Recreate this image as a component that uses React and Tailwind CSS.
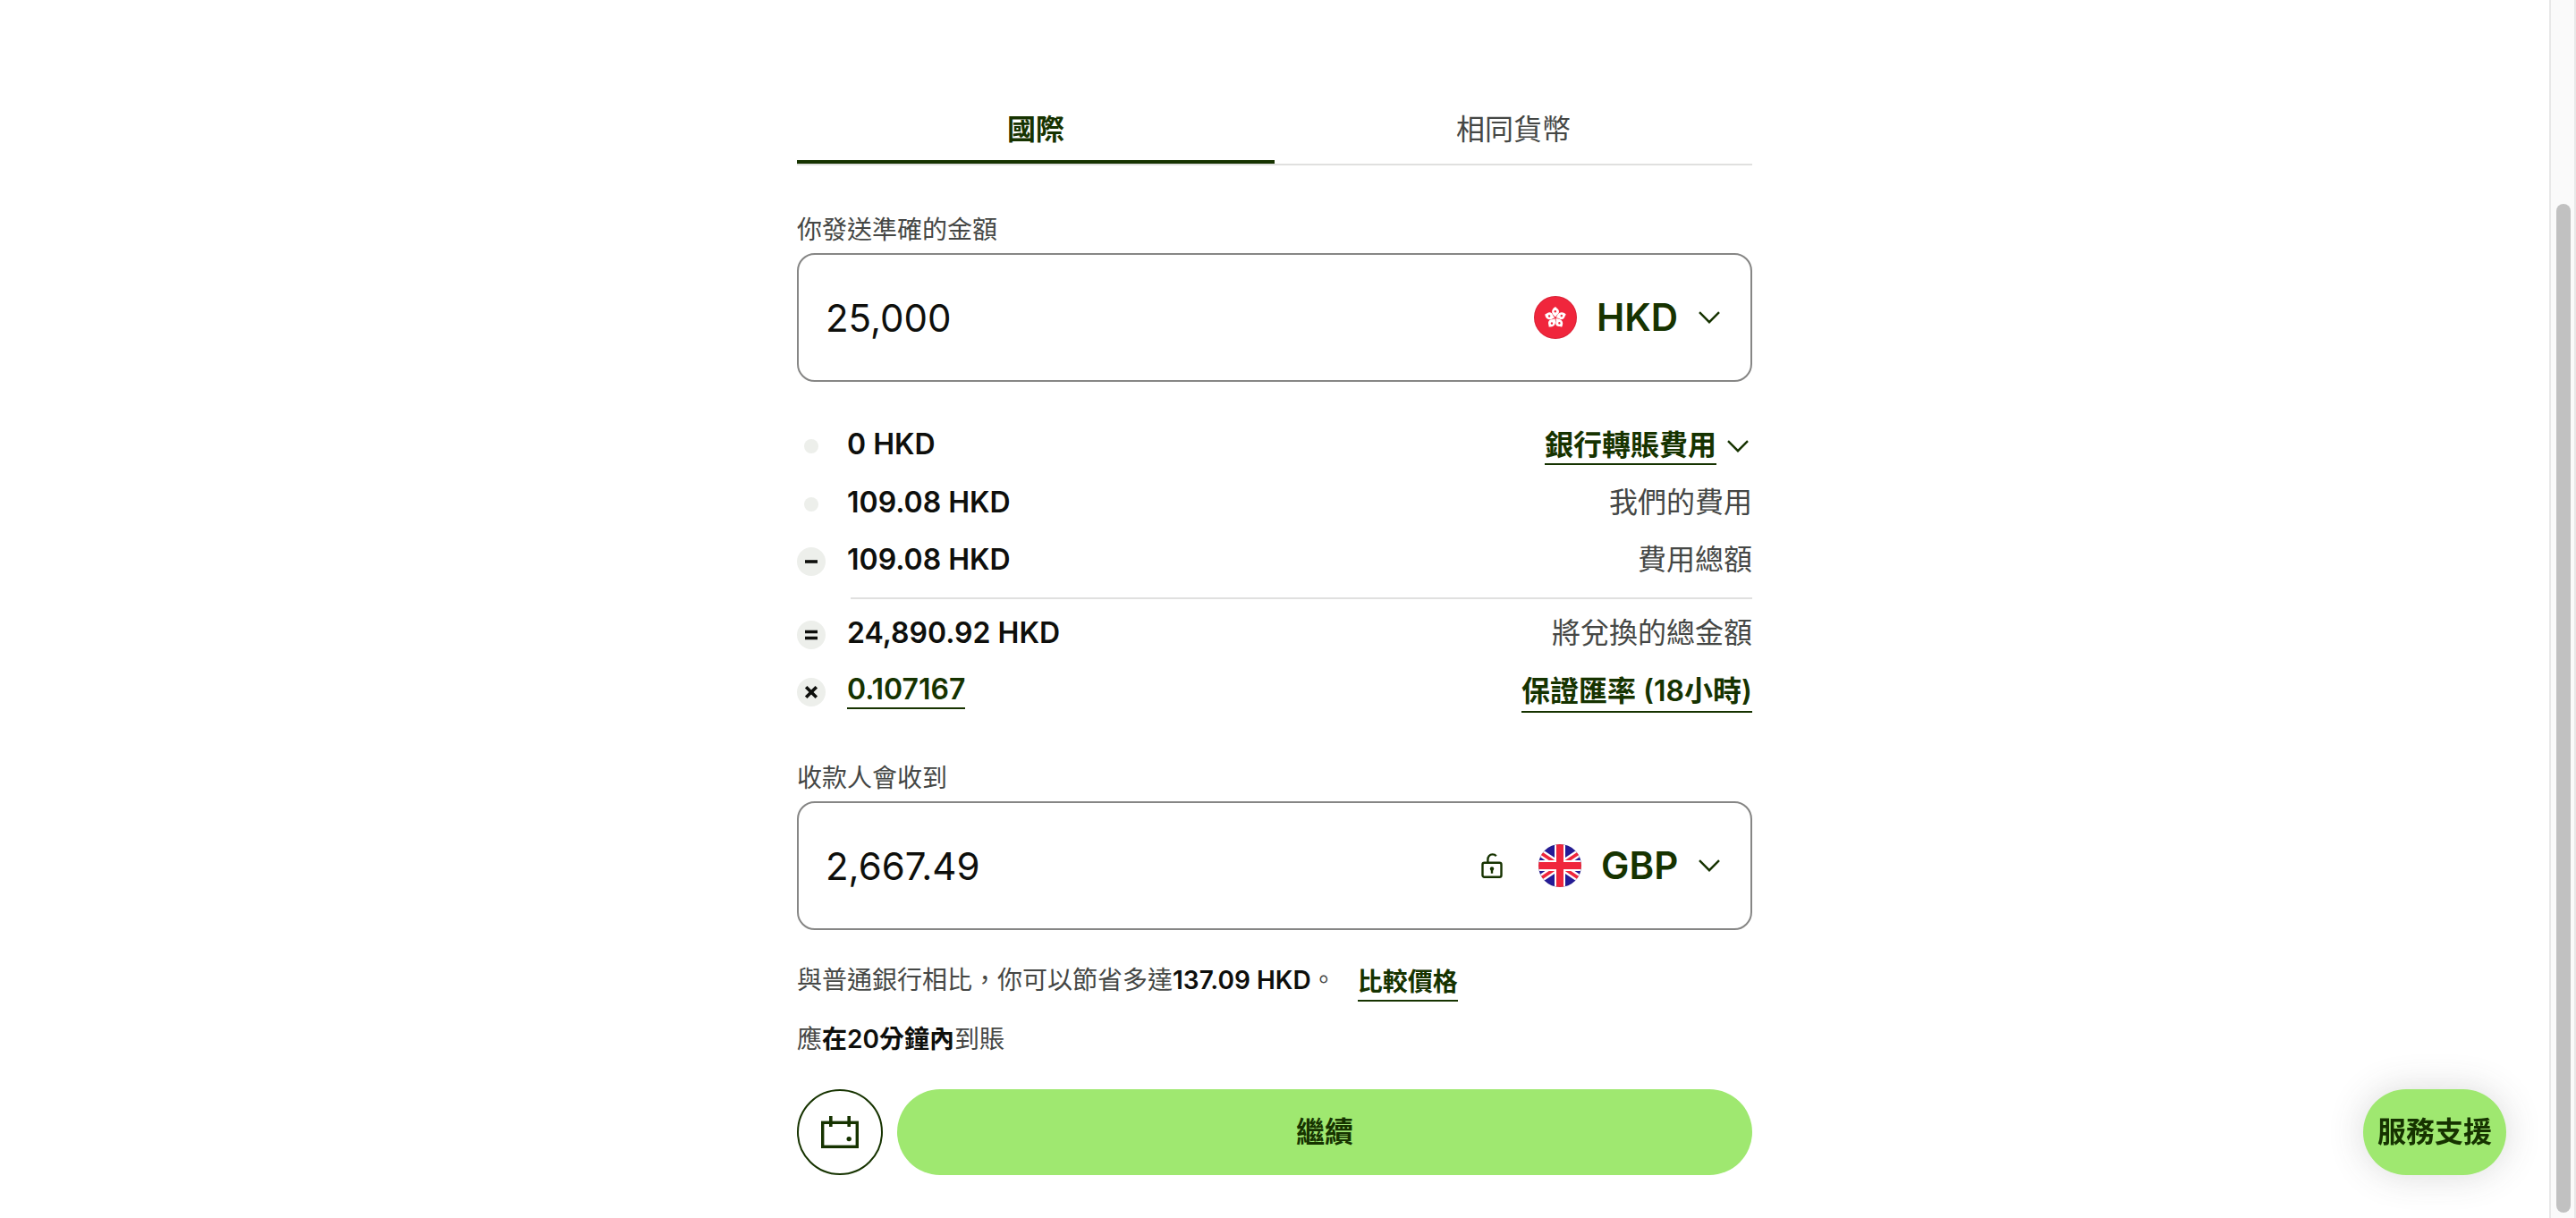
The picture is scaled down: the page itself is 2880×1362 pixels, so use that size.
import React, { useState } from "react";

function Chevron() {
  return (
    <svg className="h-4 w-6 shrink-0" viewBox="0 0 24 16" fill="none" aria-hidden="true">
      <path d="M1 2.2 12 13.2 23 2.2" stroke="#163300" strokeWidth="2.4" />
    </svg>
  );
}

function FlagHK() {
  return (
    <svg className="size-12 shrink-0" viewBox="0 0 48 48" aria-hidden="true">
      <circle cx="24" cy="24" r="24" fill="#f0263c" />
      <circle cx="24" cy="24" r="23.5" fill="none" stroke="#000" strokeOpacity="0.1" />
      <g transform="translate(24 24.5)">
        {[0, 72, 144, 216, 288].map((angle) => (
          <g key={angle} transform={`rotate(${angle})`}>
            <path
              d="M0.4 -1C-3.8 -2.8 -6.6 -9.2 0.2 -12.4C0.6 -10.8 5 -9.4 3.8 -5.8C3 -3.8 0.8 -3.6 0.4 -1Z"
              fill="#fff"
            />
            <circle cx="-0.2" cy="-7.2" r="1.2" fill="#f0263c" />
          </g>
        ))}
      </g>
    </svg>
  );
}

function FlagGB() {
  return (
    <svg className="size-12 shrink-0" viewBox="0 0 48 48" aria-hidden="true">
      <clipPath id="gb-round">
        <circle cx="24" cy="24" r="24" />
      </clipPath>
      <g clipPath="url(#gb-round)">
        <path d="M0 0h48v48H0z" fill="#241b96" />
        <path d="M-3 6 51 42M-3 42 51 6" stroke="#fff" strokeWidth="8.4" />
        <path d="M-3 6 24 24M24 24 51 42M-3 42 24 24M24 24 51 6" stroke="#f0263c" strokeWidth="3.6" />
        <path d="M24 0v48M0 24h48" stroke="#fff" strokeWidth="12" />
        <path d="M24 0v48M0 24h48" stroke="#f0263c" strokeWidth="8" />
      </g>
      <circle cx="24" cy="24" r="23.5" fill="none" stroke="#000" strokeOpacity="0.08" />
    </svg>
  );
}

function UnlockIcon() {
  return (
    <svg className="h-7 w-6" viewBox="0 0 24 28" fill="none" stroke="#163300" strokeWidth="2.4" aria-hidden="true">
      <rect x="1.5" y="10.8" width="21" height="16" rx="2" />
      <path d="M7.4 10.8V7.4C7.4 3.6 9.6 1.4 12.6 1.4C14.4 1.4 15.8 2 16.8 3.2" />
      <circle cx="12" cy="17.4" r="2.2" fill="#163300" stroke="none" />
      <path d="M12 17.5v5.2" />
    </svg>
  );
}

function CalendarIcon() {
  return (
    <svg className="h-9 w-[42px]" viewBox="0 0 42 36" fill="none" stroke="#163300" strokeWidth="3.4" aria-hidden="true">
      <rect x="1.7" y="7.3" width="38.6" height="27" />
      <path d="M10.8 0v12M31.2 0v12" strokeWidth="3.6" />
      <circle cx="31.2" cy="25.6" r="2.7" fill="#163300" stroke="none" />
    </svg>
  );
}

const marks = {
  minus: "M9 16h14",
  equals: "M9 12.5h14M9 19.5h14",
  times: "M10.2 10.2 21.8 21.8M21.8 10.2 10.2 21.8",
};

function Marker({ kind }) {
  return (
    <svg className="size-8 shrink-0" viewBox="0 0 32 32" fill="none" aria-hidden="true">
      <circle cx="16" cy="16" r={kind === "dot" ? 8 : 16} fill="#edefeb" />
      {marks[kind] && <path d={marks[kind]} stroke="#0e0f0c" strokeWidth="3.6" />}
    </svg>
  );
}

function Row({ kind, amount, children }) {
  return (
    <li className="flex h-16 items-center first:mb-px">
      <Marker kind={kind} />
      <span className="ml-6 pb-1 font-semibold text-[#0e0f0c]">{amount}</span>
      <span className="ml-auto flex items-center text-[#454745]">{children}</span>
    </li>
  );
}

function MoneyField({ id, label, value, currency, flag, lock }) {
  const [amount, setAmount] = useState(value);
  return (
    <div>
      <label htmlFor={id} className="mb-3 block pt-0.5 text-[28px] leading-7 text-[#454745]">
        {label}
      </label>
      <div className="flex h-36 items-center rounded-[20px] border-2 border-[#868685] pr-[34px] pl-[30px] text-[42px]">
        <input
          id={id}
          type="text"
          inputMode="decimal"
          value={amount}
          onChange={(e) => setAmount(e.target.value)}
          className="h-16 w-0 min-w-0 flex-1 bg-transparent text-[#0e0f0c] outline-none"
        />
        {lock && (
          <button type="button" aria-label="鎖定金額" className="mr-10">
            <UnlockIcon />
          </button>
        )}
        <label className="flex items-center gap-[22px]">
          {flag}
          <select
            aria-label="貨幣"
            defaultValue={currency}
            className="h-16 appearance-none bg-transparent font-semibold text-[#163300] outline-none"
          >
            <option>{currency}</option>
          </select>
          <Chevron />
        </label>
      </div>
    </div>
  );
}

export default function App() {
  return (
    <div
      lang="zh-Hant"
      className="flex min-h-screen bg-white font-['Inter','Noto_Sans_CJK_TC',sans-serif] text-[32px] leading-8"
    >
      <main className="flex-1">
        <div className="mx-auto max-w-[1068px] pt-[111px]">
          <div role="tablist" className="grid grid-cols-2 border-b-2 border-[#e0e0df]">
            <button
              type="button"
              role="tab"
              aria-selected="true"
              className="border-b-4 border-[#163300] py-[18px] font-semibold text-[#163300]"
            >
              國際
            </button>
            <button
              type="button"
              role="tab"
              aria-selected="false"
              className="border-b-4 border-transparent py-[18px] text-[#454745]"
            >
              相同貨幣
            </button>
          </div>

          <div className="mt-14">
            <MoneyField id="send" label="你發送準確的金額" value="25,000" currency="HKD" flag={<FlagHK />} />
          </div>

          <ul className="mt-10">
            <Row kind="dot" amount="0 HKD">
              <a href="#fees" className="border-b-2 border-[#163300] leading-10 font-semibold text-[#163300]">
                銀行轉賬費用
              </a>
              <span className="mr-1 ml-3">
                <Chevron />
              </span>
            </Row>
            <Row kind="dot" amount="109.08 HKD">
              <span className="pb-1">我們的費用</span>
            </Row>
            <Row kind="minus" amount="109.08 HKD">
              <span className="pb-1">費用總額</span>
            </Row>
            <li role="separator" className="my-2 ml-[60px] h-0.5 bg-[#e0e0df]" />
            <Row kind="equals" amount="24,890.92 HKD">
              <span className="pb-1">將兌換的總金額</span>
            </Row>
            <Row
              kind="times"
              amount={
                <a href="#rate" className="block border-b-2 border-[#163300] leading-10 text-[#163300]">
                  0.107167
                </a>
              }
            >
              <a href="#guarantee" className="border-b-2 border-[#163300] leading-11 font-semibold text-[#163300]">
                保證匯率 (18小時)
              </a>
            </Row>
          </ul>

          <div className="mt-12">
            <MoneyField id="receive" label="收款人會收到" value="2,667.49" currency="GBP" flag={<FlagGB />} lock />
          </div>

          <div className="mt-10 flex h-8 items-center text-[28px] text-[#454745]">
            <p>
              與普通銀行相比，你可以節省多達
              <strong className="font-semibold text-[#0e0f0c]">137.09 HKD</strong>。
            </p>
            <a
              href="#compare"
              className="mt-1.5 ml-6 border-b-2 border-[#163300] leading-10 font-semibold text-[#163300]"
            >
              比較價格
            </a>
          </div>
          <p className="mt-[34px] text-[28px] text-[#454745]">
            應<strong className="font-semibold text-[#0e0f0c]">在20分鐘內</strong>到賬
          </p>

          <div className="mt-10 flex gap-4">
            <button
              type="button"
              aria-label="預定匯款"
              className="grid size-24 shrink-0 place-items-center rounded-full border-2 border-[#163300]"
            >
              <CalendarIcon />
            </button>
            <button type="button" className="h-24 flex-1 rounded-full bg-[#9fe870] font-semibold text-[#163300]">
              繼續
            </button>
          </div>
        </div>
      </main>

      <button
        type="button"
        className="fixed right-[78px] bottom-12 h-24 rounded-full bg-[#9fe870] px-4 font-semibold text-[#163300] shadow-[0_0_40px_rgba(69,71,69,0.2)]"
      >
        服務支援
      </button>

      <div aria-hidden="true" className="flex w-[30px] border-x-2 border-[#e8e8e8] bg-[#fafafa] px-1.5 pt-[228px] pb-1.5">
        <div className="w-4 shrink-0 rounded-full bg-[#c1c1c1]" />
      </div>
    </div>
  );
}
